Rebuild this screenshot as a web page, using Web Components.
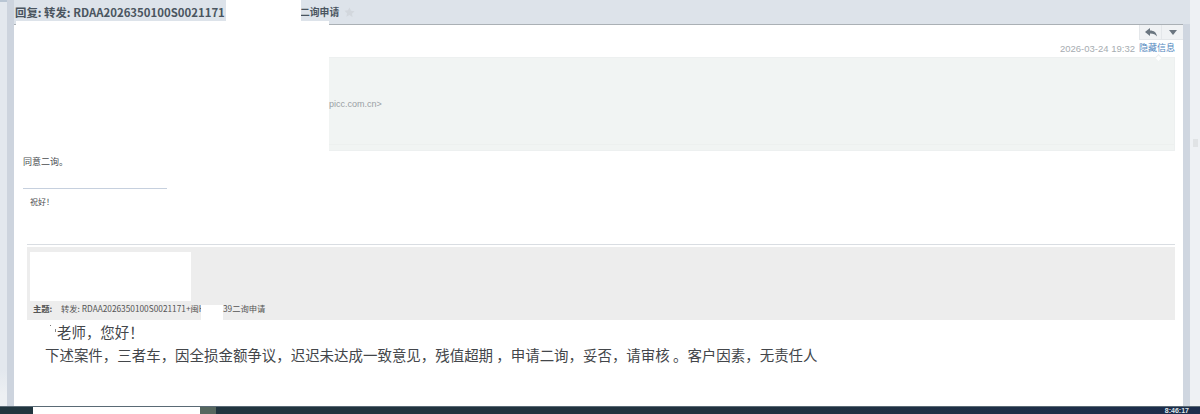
<!doctype html>
<html lang="zh"><head><meta charset="utf-8">
<style>
html,body{margin:0;padding:0;width:1200px;height:414px;overflow:hidden;background:#e3e8ee;font-family:"Liberation Sans","Noto Sans CJK SC",sans-serif}
</style></head><body>
<mail-app></mail-app>
<script>
const FONT='"Noto Sans CJK SC","Liberation Sans",sans-serif';
function def(name,html){customElements.define(name,class extends HTMLElement{constructor(){super();this.attachShadow({mode:'open'}).innerHTML=html}})}

def('mail-header',`<style>
:host{display:flex;align-items:center;height:25px;background:#dde3ea;position:relative;flex:none;gap:5px;padding-left:1px;font:700 11.4px/24px ${FONT};color:#4a5560;border-bottom:1px solid #aab0b5;box-sizing:border-box}
.t{white-space:nowrap;display:flex}
.a{width:211px;white-space:nowrap}
.gap{width:75px;background:#fff;height:21px;flex:none;position:relative;z-index:1}
.e{font-size:9.8px;margin-left:-1px}
svg{display:block}
.mask2{position:absolute;left:2px;top:21px;width:313px;height:4px;background:#fff}
</style>
<span class="t"><span class="a"><slot></slot></span><span class="gap"></span><span class="e">二询申请</span></span>
<svg width="11" height="11" viewBox="0 0 24 24"><path fill="#d2d7dd" d="M12 1l3.400 7.200 7.600 1-5.600 5.400 1.400 7.800L12 17.700 5.200 21.400l1.400-7.800L1 8.200l7.600-1z"/></svg>
<div class="mask2"></div>`);

def('tool-bar',`<style>
:host{display:flex;justify-content:flex-end;height:15px;flex:none}
.b{display:flex;border:1px solid #e4e7ea;border-top:0;border-right:0;background:#f0f2f4;height:15px;box-sizing:border-box}
.i{width:21px;display:flex;align-items:center;justify-content:center}
.i+.i{border-left:1px solid #e4e7ea}
</style><div class="b">
<div class="i"><svg width="12" height="9" viewBox="0 0 12 9"><path fill="#6b7680" d="M0 4L5 0v2.500C9 2.500 11.500 4.500 12 8.500 10.500 6.500 8.500 5.500 5 5.500V8z"/></svg></div>
<div class="i"><svg width="8" height="5" viewBox="0 0 8 5"><path fill="#6b7680" d="M0 0h8L4 5z"/></svg></div>
</div>`);

def('meta-line',`<style>
:host{display:flex;justify-content:flex-end;gap:4px;height:17px;flex:none;padding-right:8px;font:9.5px/17px "Liberation Sans",${FONT};color:#a6acb1}
.l{color:#4f86bd;font-size:9px}
</style><span><slot></slot></span><span class="l">隐藏信息</span>`);

def('info-box',`<style>
:host{display:block;height:94px;flex:none;margin:0 8px 0 0;background:#f1f4f3;border:1px solid #edf0f0;box-sizing:border-box;position:relative;font:9px/14px "Liberation Sans",${FONT};color:#9aa0a5}
.mask{position:absolute;left:-1px;top:-1px;bottom:-1px;width:315px;background:#fff}
.t{position:absolute;left:314px;top:39px}
.rule{position:absolute;left:314px;right:0;bottom:5px;border-top:1px solid #edf0ef}
.caret{position:absolute;right:13px;top:-3px;width:4px;height:4px;background:#fff;border:1px solid #edf0f0;border-right:0;border-bottom:0;transform:rotate(45deg)}
</style><div class="mask"></div><div class="t"><slot></slot></div><div class="rule"></div><div class="caret"></div>`);

def('reply-body',`<style>
:host{display:block;flex:none;font:9px/12px ${FONT};color:#4a4d50;height:93px;padding:5px 0 0 9px;box-sizing:border-box}
.a{height:32px}
hr{margin:0;border:0;border-top:1px solid #c6d0de;width:144px;height:0}
.b{padding:7px 0 0 7px;font-size:8px}
</style><div class="a"><slot></slot></div><hr><div class="b"><slot name="sign"></slot></div>`);

def('quote-block',`<style>
:host{display:block;flex:none;margin:0 8px 0 13px;border-top:1px solid #d9dde2;padding-top:2px}
.g{height:73px;background:#ededed;display:flex;flex-direction:column;box-sizing:border-box;padding:5px 0 0 3px;font:8.3px/15px ${FONT};color:#555}
.w{background:#fff;width:161px;height:49px;flex:none}
.t{display:flex;white-space:nowrap;padding-left:3px;height:19px}
b{width:28px;flex:none}
.s{width:140px;flex:none;overflow:hidden}
.m{width:22px;background:#fff;flex:none;height:15px;margin-top:4px}
</style><div class="g">
<div class="w"></div>
<div class="t"><b>主题:</b><span class="s"><slot></slot></span><span class="m"></span><span><slot name="end"></slot></span></div>
</div>`);

def('message-text',`<style>
:host{display:block;flex:none;font:14.46px/23px ${FONT};color:#43464a;padding:0 0 0 31px;height:86px;box-sizing:border-box;white-space:nowrap}
.l1{padding-left:12px;height:23px;background:
 linear-gradient(#666,#666) -10px 5px/1px 1px no-repeat,
 linear-gradient(#666,#666) -3px 5px/1px 1px no-repeat,
 linear-gradient(#777,#777) 5px 5px/1px 1px no-repeat,
 linear-gradient(#888,#888) 10px 9px/1px 3px no-repeat}
</style><div class="l1"><slot name="a"></slot></div><div class="l2"><slot name="b"></slot></div>`);

def('task-bar',`<style>
:host{display:flex;height:8px;background:linear-gradient(90deg,#21363f 0,#21323f 60%,#1c2d4c 100%);position:absolute;left:0;right:0;bottom:0;border-top:1px solid #5a6a75;box-sizing:border-box;justify-content:flex-end;overflow:hidden;font:700 7px/7px "Liberation Sans",sans-serif;color:#dfe6ea;padding-right:11px}
.w{position:absolute;left:33px;top:-1px;width:167px;height:8px;background:#fff}
.a{position:absolute;left:200px;top:0;width:16px;height:7px;background:#56675f}
</style><div class="w"></div><div class="a"></div><slot></slot>`);

def('mail-app',`<style>
:host{display:flex;width:1200px;height:414px;position:relative;background:#e3e8ee;overflow:hidden}
.l{width:7px;flex:none;background:linear-gradient(#b9c6d4 0 2px,#e3e8ee 2px 370px,#edf0f3 395px)}
.bar{width:7px;flex:none;background:#cdd4de}
.main{width:1169px;flex:none;display:flex;flex-direction:column;background:#fff}
.r1{width:7px;flex:none;background:linear-gradient(#dde3ea 0 24px,#cfd6e0 24px)}
.r2{flex:1;background:#eef1f4}
.grip{width:5px;height:8px;margin:139px 0 0 3px;background:#e0e3e5}
</style>
<div class="l"></div><div class="bar"></div>
<div class="main">
<mail-header>回复: 转发: RDAA2026350100S0021171</mail-header>
<tool-bar></tool-bar>
<meta-line>2026-03-24 19:32</meta-line>
<info-box>picc.com.cn&gt;</info-box>
<reply-body>同意二询。<span slot="sign">祝好！</span></reply-body>
<quote-block>转发: RDAA2026350100S0021171+闽H<span slot="end">39二询申请</span></quote-block>
<message-text><span slot="a">老师，您好！</span><span slot="b">下述案件，三者车，因全损金额争议，迟迟未达成一致意见，残值超期 ，申请二询，妥否，请审核 。客户因素，无责任人</span></message-text>
</div>
<div class="r1"></div><div class="r2"><div class="grip"></div></div>
<task-bar>8:46:17</task-bar>`);
</script>
</body></html>
